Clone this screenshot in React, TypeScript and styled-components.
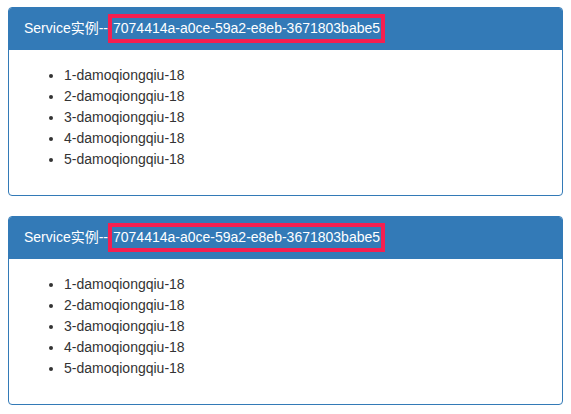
import React from "react";
import styled, { createGlobalStyle } from "styled-components";

const Global = createGlobalStyle`
  html, body { margin: 0; padding: 0; background: #fff; }
  body {
    font-family: "Liberation Sans", Arial, "Noto Sans CJK SC", sans-serif;
    font-size: 14px;
    line-height: 1.5;
    color: #333;
  }
`;

const Page = styled.div`
  padding: 7px 8px 0;
`;

const Panel = styled.section`
  margin-bottom: 20px;
  background: #fff;
  border: 1px solid #337ab7;
  border-radius: 4px;
`;

const Heading = styled.div`
  padding: 10px 15px;
  line-height: 21px;
  background: #337ab7;
  color: #fff;
  border-bottom: 1px solid #337ab7;
  border-top-left-radius: 3px;
  border-top-right-radius: 3px;
`;

const Uuid = styled.span`
  border: 4px solid #f51f50;
  padding: 2px 1px 3px;
`;

const Body = styled.div`
  padding: 15px;
`;

const List = styled.ul`
  margin: 0 0 10px;
  padding-left: 40px;
  line-height: 21px;
`;

const items = [1, 2, 3, 4, 5].map((n) => `${n}-damoqiongqiu-18`);

const ServicePanel = () => (
  <Panel>
    <Heading>
      Service实例--<Uuid>7074414a-a0ce-59a2-e8eb-3671803babe5</Uuid>
    </Heading>
    <Body>
      <List>
        {items.map((t) => (
          <li key={t}>{t}</li>
        ))}
      </List>
    </Body>
  </Panel>
);

export default function App() {
  return (
    <>
      <Global />
      <Page>
        <ServicePanel />
        <ServicePanel />
      </Page>
    </>
  );
}
